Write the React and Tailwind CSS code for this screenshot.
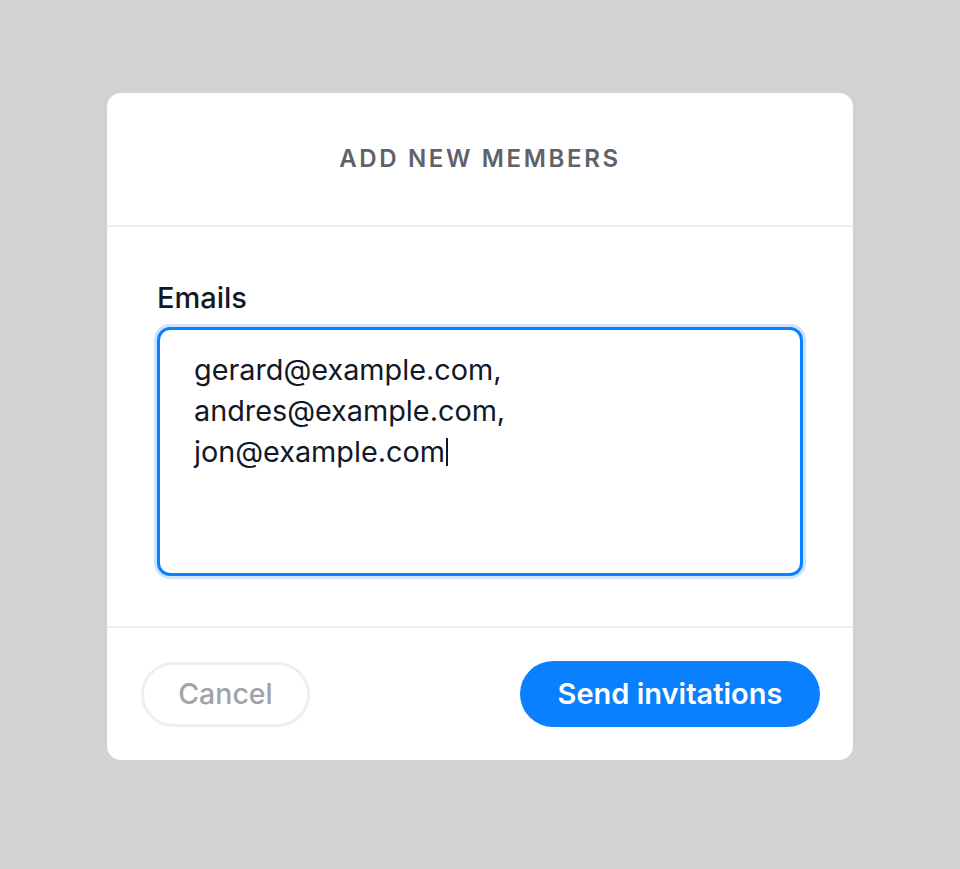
import React from 'react';

export default function App() {
    return (
        <div
            className="min-h-screen w-full bg-[#d1d2d4] flex justify-center pt-[93px]"
            style={{ fontFamily: 'Inter, "Noto Sans", sans-serif' }}
        >
            <div className="w-[746px] h-[667px] bg-white rounded-[14px] flex flex-col">
                <div className="h-[134px] flex items-center justify-center border-b-2 border-[#eeeff0]">
                    <h1 className="text-[24px] font-semibold tracking-[0.11em] text-[#5f6369]">ADD NEW MEMBERS</h1>
                </div>

                <div className="px-[50px] pt-[54px] pb-[50px] border-b-2 border-[#eeeff0]">
                    <label className="block text-[29px] font-medium text-[#111827] leading-[34px] mb-[12px]">Emails</label>
                    <div className="h-[249px] rounded-[13px] border-[3px] border-[#0a80ff] ring-[3px] ring-[#cfe3fb] pl-[34px] pt-[19px]">
                        <div className="text-[28.8px] leading-[41px] text-[#111827]">
                            <div>gerard@example.com,</div>
                            <div>andres@example.com,</div>
                            <div className="flex items-center">
                                jon@example.com
                                <span className="inline-block w-[2px] h-[28px] bg-[#111827] ml-[1px]" />
                            </div>
                        </div>
                    </div>
                </div>

                <div className="flex-1 flex items-center justify-between pl-[34px] pr-[33px]">
                    <button className="w-[169px] h-[65px] rounded-full border-[3px] border-[#eeeff0] text-[28.5px] font-medium text-[#a0a4aa]">
                        Cancel
                    </button>
                    <button className="w-[300px] h-[66px] rounded-full bg-[#0a80ff] text-[29px] font-semibold text-white">
                        Send invitations
                    </button>
                </div>
            </div>
        </div>
    );
}
